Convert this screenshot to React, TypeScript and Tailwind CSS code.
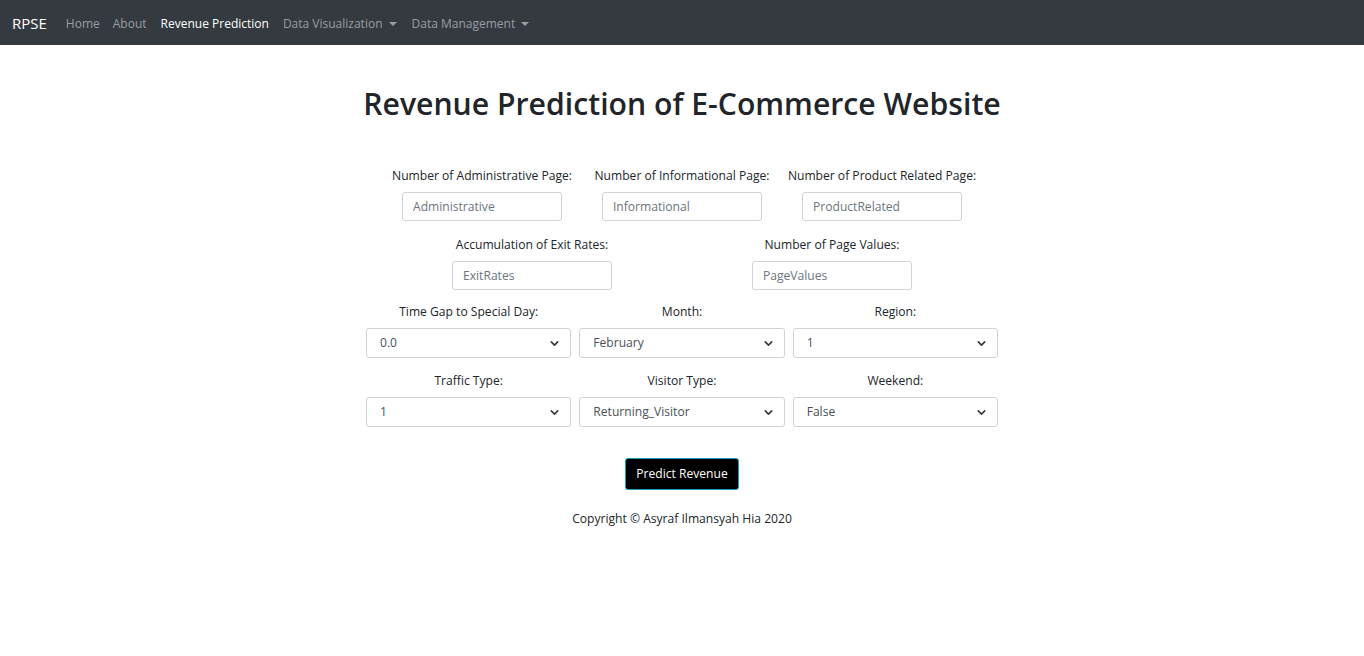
import { ChevronDown } from 'lucide-react';

const font = { fontFamily: '"Open Sans", "Noto Sans", sans-serif' };

function NavBar() {
  return (
    <nav className="h-[45px] bg-[#343a40] flex items-center px-3 pt-[2px] text-[12px]">
      <span className="text-white text-[15px] mr-[19px]">RPSE</span>
      <a className="text-[#9a9da0] mr-[13px]">Home</a>
      <a className="text-[#9a9da0] mr-[14px]">About</a>
      <a className="text-white mr-[14px]">Revenue Prediction</a>
      <a className="text-[#9a9da0] mr-[15px] flex items-center">
        Data Visualization
        <span className="ml-[6px] border-x-[4px] border-x-transparent border-t-[4px] border-t-[#9a9da0]" />
      </a>
      <a className="text-[#9a9da0] flex items-center">
        Data Management
        <span className="ml-[6px] border-x-[4px] border-x-transparent border-t-[4px] border-t-[#9a9da0]" />
      </a>
    </nav>
  );
}

function TextField({ label, placeholder }: { label: string; placeholder: string }) {
  return (
    <div className="flex flex-col items-center">
      <label className="text-[12.1px] text-[#212529] leading-[20px]">{label}</label>
      <input
        placeholder={placeholder}
        className="mt-[6px] w-[160px] h-[29px] border border-[#ced4da] rounded-[3px] px-[10px] text-[12.1px] text-[#495057] placeholder:text-[#6c757d] outline-none"
      />
    </div>
  );
}

function SelectField({ label, value }: { label: string; value: string }) {
  return (
    <div className="flex flex-col items-center">
      <label className="text-[12.1px] text-[#212529] leading-[20px]">{label}</label>
      <div className="mt-[6px] w-full h-[30px] border border-[#ced4da] rounded-[3px] flex items-center justify-between pl-[13px] pr-[9px] text-[12.1px] text-[#495057]">
        <span>{value}</span>
        <ChevronDown size={13} strokeWidth={3} className="text-[#343a40]" />
      </div>
    </div>
  );
}

export default function App() {
  return (
    <div style={font} className="min-h-screen bg-white">
      <NavBar />
      <main className="flex flex-col items-center">
        <h1 className="mt-[39px] text-[30.2px] font-semibold text-[#212529] leading-[40px]">
          Revenue Prediction of E-Commerce Website
        </h1>
        <div className="mt-[42px] flex">
          <div className="w-[200px] flex justify-center"><TextField label="Number of Administrative Page:" placeholder="Administrative" /></div>
          <div className="w-[200px] flex justify-center"><TextField label="Number of Informational Page:" placeholder="Informational" /></div>
          <div className="w-[200px] flex justify-center"><TextField label="Number of Product Related Page:" placeholder="ProductRelated" /></div>
        </div>
        <div className="mt-[14px] flex">
          <div className="w-[300px] flex justify-center"><TextField label="Accumulation of Exit Rates:" placeholder="ExitRates" /></div>
          <div className="w-[300px] flex justify-center"><TextField label="Number of Page Values:" placeholder="PageValues" /></div>
        </div>
        <div className="mt-[12px] w-[632px] grid grid-cols-3 gap-x-[8px] gap-y-[13px]">
          <SelectField label="Time Gap to Special Day:" value="0.0" />
          <SelectField label="Month:" value="February" />
          <SelectField label="Region:" value="1" />
          <SelectField label="Traffic Type:" value="1" />
          <SelectField label="Visitor Type:" value="Returning_Visitor" />
          <SelectField label="Weekend:" value="False" />
        </div>
        <button className="mt-[31px] h-[32px] px-[10px] bg-black text-white text-[12.1px] border border-[#17a2b8] rounded-[3px]">
          Predict Revenue
        </button>
        <p className="mt-[20px] text-[12.1px] text-[#212529]">Copyright © Asyraf Ilmansyah Hia 2020</p>
      </main>
    </div>
  );
}
